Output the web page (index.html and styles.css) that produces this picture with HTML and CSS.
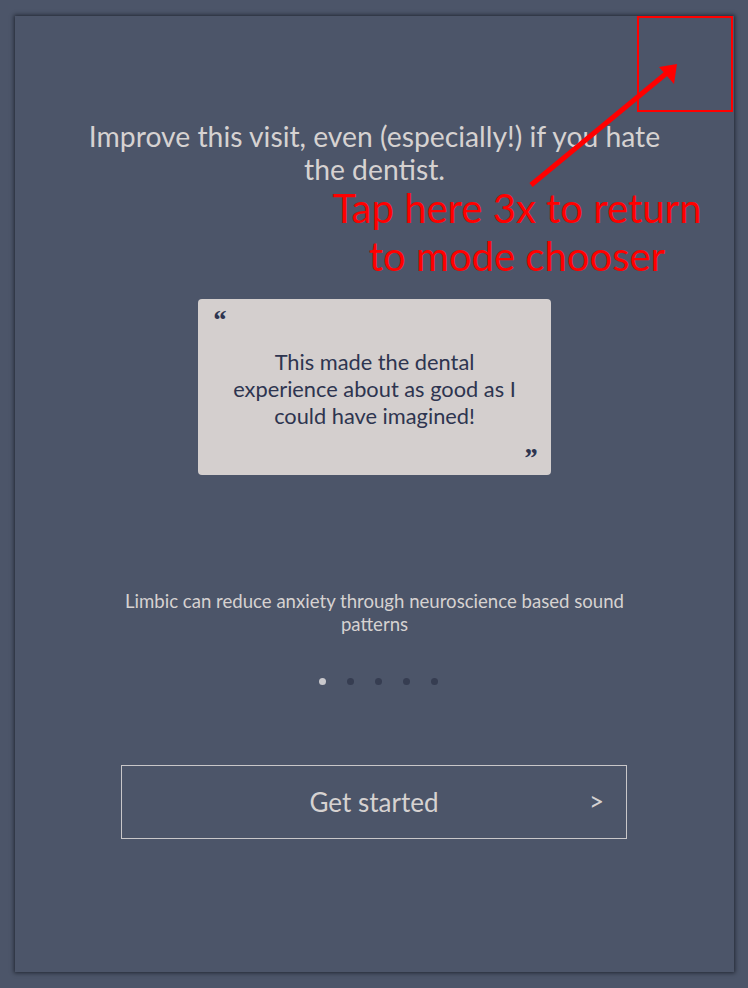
FILE: index.html
```html
<!DOCTYPE html>
<html lang="en">
<head>
<meta charset="utf-8">
<title>Limbic</title>
<link rel="stylesheet" href="styles.css">
</head>
<body>
<main class="panel">
  <h1 class="headline">Improve this visit, even (especially!) if you hate the dentist.</h1>
  <section class="quote-card">
    <span class="quote-mark open">&ldquo;</span>
    <p class="quote-text">This made the dental experience about as good as I could have imagined!</p>
    <span class="quote-mark close">&rdquo;</span>
  </section>
  <p class="subtitle">Limbic can reduce anxiety through neuroscience based sound patterns</p>
  <div class="dots">
    <span class="dot active"></span>
    <span class="dot"></span>
    <span class="dot"></span>
    <span class="dot"></span>
    <span class="dot"></span>
  </div>
  <button class="cta" type="button"><span class="cta-label">Get started</span><span class="cta-arrow">&gt;</span></button>
</main>
<div class="annotation">
  <div class="tap-zone"></div>
  <svg class="arrow" width="748" height="988" viewBox="0 0 748 988">
    <line x1="531" y1="185" x2="668" y2="72" stroke="#ff0000" stroke-width="5"/>
    <polygon points="677,64 659,67 674,84" fill="#ff0000"/>
  </svg>
  <p class="annotation-text">Tap here 3x to return<br>to mode chooser</p>
</div>
</body>
</html>
```
FILE: styles.css
```css
html, body {
  margin: 0;
  padding: 0;
}
body {
  background: #4c5569;
  font-family: Lato, "Open Sans", sans-serif;
  width: 748px;
  height: 988px;
  overflow: hidden;
  position: relative;
}
.panel {
  margin: 16px 14px 0 15px;
  width: 719px;
  height: 956px;
  box-sizing: border-box;
  box-shadow: 0 0 4px 1px rgba(20, 24, 34, 0.75);
  background: #4c5569;
  display: flex;
  flex-direction: column;
  align-items: center;
  padding-top: 104px;
}
.headline {
  margin: 0;
  width: 590px;
  text-align: center;
  font-weight: 400;
  font-size: 28.3px;
  line-height: 33px;
  color: #d6d2d1;
}
.quote-card {
  margin-top: 113px;
  width: 353px;
  height: 176px;
  box-sizing: border-box;
  background: #d4cfce;
  border-radius: 4px;
  display: flex;
  flex-direction: column;
  align-items: center;
  padding: 10px 14px 0 14px;
}
.quote-mark {
  font-size: 28px;
  line-height: 22px;
  height: 22px;
  font-weight: 700;
  font-style: italic;
  color: #2e3550;
  font-family: "Liberation Serif", serif;
}
.quote-mark.open {
  align-self: flex-start;
  margin-left: 0;
}
.quote-mark.close {
  align-self: flex-end;
  margin-top: 18px;
  margin-right: 0;
}
.quote-text {
  margin: 17px 0 0 0;
  max-width: 292px;
  text-align: center;
  font-size: 21.8px;
  line-height: 27px;
  color: #2e3550;
}
.subtitle {
  margin: 115px 0 0 0;
  width: 540px;
  text-align: center;
  font-size: 18.6px;
  line-height: 23px;
  color: #d6d2d1;
}
.dots {
  margin-top: 42px;
  margin-left: 7px;
  display: flex;
  gap: 21px;
}
.dot {
  width: 7px;
  height: 7px;
  border-radius: 50%;
  background: #363d51;
}
.dot.active {
  background: #c9c8cc;
}
.cta {
  margin-top: 80px;
  margin-right: 1px;
  width: 506px;
  height: 74px;
  box-sizing: border-box;
  border: 1px solid #c9c7c9;
  background: transparent;
  position: relative;
  font-family: Lato, sans-serif;
  color: #d6d2d1;
  display: flex;
  align-items: center;
  justify-content: center;
  padding: 0;
}
.cta-label {
  font-size: 26px;
}
.cta-arrow {
  position: absolute;
  right: 22px;
  top: 19px;
  font-size: 26px;
}
.annotation {
  position: absolute;
  inset: 0;
  pointer-events: none;
}
.tap-zone {
  position: absolute;
  left: 637px;
  top: 16px;
  width: 96px;
  height: 96px;
  box-sizing: border-box;
  border: 2px solid #ff0000;
}
.arrow {
  position: absolute;
  left: 0;
  top: 0;
}
.annotation-text {
  position: absolute;
  left: 317px;
  top: 184px;
  width: 400px;
  margin: 0;
  text-align: center;
  color: #ff0000;
  font-size: 40px;
  line-height: 48px;
}
```
